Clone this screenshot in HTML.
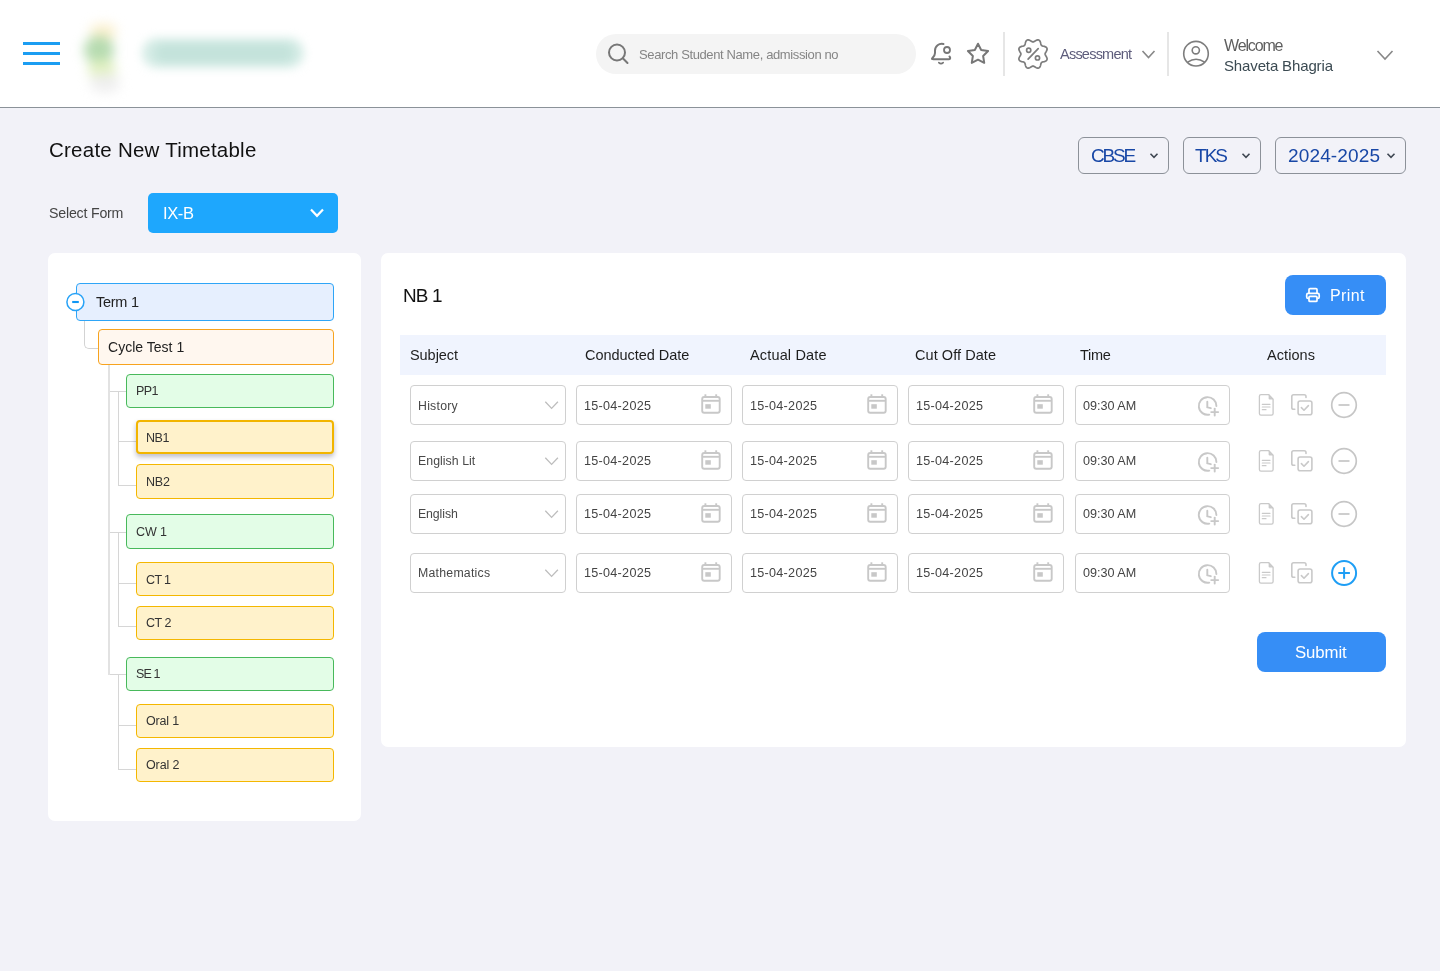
<!DOCTYPE html>
<html><head><meta charset="utf-8"><title>Create New Timetable</title>
<style>
html,body{margin:0;padding:0;}
body{width:1440px;height:971px;position:relative;overflow:hidden;background:#f2f2f8;font-family:"Liberation Sans",sans-serif;}
.a{position:absolute;}
.t{position:absolute;white-space:nowrap;line-height:1;will-change:transform;}
svg{overflow:visible;}
</style></head><body>
<div class="a" style="left:0px;top:0px;width:1440px;height:107px;background:#fff;"></div>
<div class="a" style="left:0px;top:107px;width:1440px;height:1px;background:#8b9299;"></div>
<div class="a" style="left:23px;top:42px;width:37px;height:3px;background:#1b9df2;"></div>
<div class="a" style="left:23px;top:52px;width:37px;height:3px;background:#1b9df2;"></div>
<div class="a" style="left:23px;top:62px;width:37px;height:3px;background:#1b9df2;"></div>
<div class="a" style="left:80px;top:20px;width:46px;height:76px;filter:blur(6px);"><div class="a" style="left:10px;top:4px;width:26px;height:16px;background:#fbf0cf;border-radius:8px;"></div><div class="a" style="left:4px;top:16px;width:30px;height:28px;background:#b6dbb0;border-radius:14px;"></div><div class="a" style="left:8px;top:40px;width:28px;height:18px;background:#e2f1c2;border-radius:9px;"></div><div class="a" style="left:10px;top:54px;width:30px;height:18px;background:#efefef;border-radius:9px;"></div></div>
<div class="a" style="left:134px;top:30px;width:178px;height:46px;filter:blur(5px);"><div class="a" style="left:8px;top:8px;width:162px;height:30px;background:#d5ece6;border-radius:15px;"></div><div class="a" style="left:20px;top:13px;width:140px;height:20px;background:#c4e3db;border-radius:10px;"></div></div>
<div class="a" style="left:596px;top:34px;width:320px;height:40px;background:#f4f4f4;border-radius:20px;"></div>
<svg class="a" style="left:600px;top:36px" width="36" height="36" viewBox="600 36 36 36"><circle cx="617" cy="52.5" r="8" fill="none" stroke="#777" stroke-width="2"/><line x1="622.8" y1="58.3" x2="627.5" y2="63" stroke="#777" stroke-width="2" stroke-linecap="round"/></svg>
<div class="t" style="left:638.50px;top:48.00px;font-size:13.00px;color:#858585;letter-spacing:-0.381px;">Search Student Name, admission no</div>
<svg class="a" style="left:924px;top:36px" width="72" height="36" viewBox="0 0 72 36" fill="none" stroke="#777" stroke-width="2" stroke-linecap="round" stroke-linejoin="round"><path d="M19.5 8 C15 7 11 10 11 14.5 L11 17 C11 19.5 10 20.5 8.5 22 C7.5 23 8 23.2 9.5 23.2 L25 23.2 C26.5 23.2 26.5 21.5 25.5 20.5"/><circle cx="23" cy="14" r="3" stroke-width="1.8"/><path d="M14.8 26.6 Q17 28.8 19.2 26.6" stroke-width="1.6"/><path d="M54.00 7.70 L57.17 13.93 L64.08 15.02 L59.14 19.97 L60.23 26.88 L54.00 23.70 L47.77 26.88 L48.86 19.97 L43.92 15.02 L50.83 13.93 Z"/></svg>
<div class="a" style="left:1003px;top:32px;width:2px;height:44px;background:#e6e6e6;"></div>
<svg class="a" style="left:1012px;top:34px" width="44" height="40" viewBox="0 0 44 40" fill="none" stroke="#7c7c7c" stroke-width="1.7" stroke-linecap="round"><path d="M33.10 20.00 L33.16 20.48 L33.35 20.97 L33.63 21.49 L33.97 22.05 L34.34 22.65 L34.67 23.28 L34.94 23.93 L35.09 24.58 L35.10 25.20 L34.95 25.78 L34.65 26.29 L34.20 26.73 L33.64 27.08 L32.99 27.35 L32.31 27.56 L31.63 27.72 L30.99 27.87 L30.42 28.04 L29.94 28.26 L29.56 28.56 L29.26 28.94 L29.04 29.42 L28.87 29.99 L28.72 30.63 L28.56 31.31 L28.35 31.99 L28.08 32.64 L27.73 33.20 L27.29 33.65 L26.78 33.95 L26.20 34.10 L25.58 34.09 L24.93 33.94 L24.28 33.67 L23.65 33.34 L23.05 32.97 L22.49 32.63 L21.97 32.35 L21.48 32.16 L21.00 32.10 L20.52 32.16 L20.03 32.35 L19.51 32.63 L18.95 32.97 L18.35 33.34 L17.72 33.67 L17.07 33.94 L16.42 34.09 L15.80 34.10 L15.22 33.95 L14.71 33.65 L14.27 33.20 L13.92 32.64 L13.65 31.99 L13.44 31.31 L13.28 30.63 L13.13 29.99 L12.96 29.42 L12.74 28.94 L12.44 28.56 L12.06 28.26 L11.58 28.04 L11.01 27.87 L10.37 27.72 L9.69 27.56 L9.01 27.35 L8.36 27.08 L7.80 26.73 L7.35 26.29 L7.05 25.78 L6.90 25.20 L6.91 24.58 L7.06 23.93 L7.33 23.28 L7.66 22.65 L8.03 22.05 L8.37 21.49 L8.65 20.97 L8.84 20.48 L8.90 20.00 L8.84 19.52 L8.65 19.03 L8.37 18.51 L8.03 17.95 L7.66 17.35 L7.33 16.72 L7.06 16.07 L6.91 15.42 L6.90 14.80 L7.05 14.22 L7.35 13.71 L7.80 13.27 L8.36 12.92 L9.01 12.65 L9.69 12.44 L10.37 12.28 L11.01 12.13 L11.58 11.96 L12.06 11.74 L12.44 11.44 L12.74 11.06 L12.96 10.58 L13.13 10.01 L13.28 9.37 L13.44 8.69 L13.65 8.01 L13.92 7.36 L14.27 6.80 L14.71 6.35 L15.22 6.05 L15.80 5.90 L16.42 5.91 L17.07 6.06 L17.72 6.33 L18.35 6.66 L18.95 7.03 L19.51 7.37 L20.03 7.65 L20.52 7.84 L21.00 7.90 L21.48 7.84 L21.97 7.65 L22.49 7.37 L23.05 7.03 L23.65 6.66 L24.28 6.33 L24.93 6.06 L25.58 5.91 L26.20 5.90 L26.78 6.05 L27.29 6.35 L27.73 6.80 L28.08 7.36 L28.35 8.01 L28.56 8.69 L28.72 9.37 L28.87 10.01 L29.04 10.58 L29.26 11.06 L29.56 11.44 L29.94 11.74 L30.42 11.96 L30.99 12.13 L31.63 12.28 L32.31 12.44 L32.99 12.65 L33.64 12.92 L34.20 13.27 L34.65 13.71 L34.95 14.22 L35.10 14.80 L35.09 15.42 L34.94 16.07 L34.67 16.72 L34.34 17.35 L33.97 17.95 L33.63 18.51 L33.35 19.03 L33.16 19.52 Z"/><circle cx="16.7" cy="16.3" r="2.1"/><circle cx="25.5" cy="23.9" r="2.1"/><line x1="16.1" y1="25.1" x2="26.2" y2="14.6"/></svg>
<div class="t" style="left:1060.00px;top:47.00px;font-size:14.50px;color:#5d5c7b;letter-spacing:-0.772px;">Assessment</div>
<svg class="a" style="left:1138px;top:44px" width="22" height="20" viewBox="1138 44 22 20" fill="none" stroke="#888" stroke-width="1.6"><path d="M1142.5 51 L1148.5 57.5 L1154.5 51"/></svg>
<div class="a" style="left:1167px;top:32px;width:2px;height:44px;background:#e6e6e6;"></div>
<svg class="a" style="left:1176px;top:34px" width="40" height="40" viewBox="0 0 40 40" fill="none" stroke="#7d7d7d" stroke-width="1.6"><circle cx="20" cy="19.7" r="12.3"/><circle cx="19.8" cy="16.3" r="3.6"/><path d="M11.7 28.2 Q20 22.2 28.6 28.2"/></svg>
<div class="t" style="left:1224.00px;top:38.00px;font-size:16.00px;color:#5e5e5e;letter-spacing:-1.150px;">Welcome</div>
<div class="t" style="left:1224.00px;top:58.00px;font-size:15.00px;color:#3b4a52;letter-spacing:-0.136px;">Shaveta Bhagria</div>
<svg class="a" style="left:1372px;top:44px" width="26" height="22" viewBox="1372 44 26 22" fill="none" stroke="#888" stroke-width="1.6"><path d="M1377.5 51 L1385 59 L1392.5 51"/></svg>
<div class="t" style="left:48.70px;top:140.00px;font-size:20.50px;color:#111;letter-spacing:0.237px;">Create New Timetable</div>
<div class="t" style="left:48.50px;top:206.00px;font-size:14.20px;color:#454545;letter-spacing:-0.205px;">Select Form</div>
<div class="a" style="left:148px;top:193px;width:190px;height:40px;background:#1ea7fd;border-radius:5px;"></div>
<div class="t" style="left:162.80px;top:205.00px;font-size:16.50px;color:#fff;letter-spacing:-0.367px;">IX-B</div>
<svg class="a" style="left:305px;top:204px" width="24" height="18" viewBox="305 204 24 18" fill="none" stroke="#fff" stroke-width="2.2"><path d="M311 209.5 L317 215.8 L323 209.5"/></svg>
<div class="a" style="left:1078px;top:137px;width:91px;height:37px;border:1px solid #8c9199;border-radius:6px;box-sizing:border-box;"></div>
<div class="t" style="left:1090.80px;top:146.00px;font-size:19.00px;color:#1847a6;letter-spacing:-2.183px;">CBSE</div>
<svg class="a" style="left:1148px;top:150px" width="12" height="12" viewBox="1148 150 12 12" fill="none" stroke="#3f4752" stroke-width="1.6"><path d="M1150.5 153.8 L1154 157.3 L1157.5 153.8"/></svg>
<div class="a" style="left:1183px;top:137px;width:78px;height:37px;border:1px solid #8c9199;border-radius:6px;box-sizing:border-box;"></div>
<div class="t" style="left:1195.00px;top:146.00px;font-size:19.00px;color:#1847a6;letter-spacing:-1.975px;">TKS</div>
<svg class="a" style="left:1240px;top:150px" width="12" height="12" viewBox="1240 150 12 12" fill="none" stroke="#3f4752" stroke-width="1.6"><path d="M1242.5 153.8 L1246 157.3 L1249.5 153.8"/></svg>
<div class="a" style="left:1275px;top:137px;width:131px;height:37px;border:1px solid #8c9199;border-radius:6px;box-sizing:border-box;"></div>
<div class="t" style="left:1288.00px;top:146.00px;font-size:19.00px;color:#1847a6;letter-spacing:0.144px;">2024-2025</div>
<svg class="a" style="left:1385px;top:150px" width="12" height="12" viewBox="1385 150 12 12" fill="none" stroke="#3f4752" stroke-width="1.6"><path d="M1387.5 153.8 L1391 157.3 L1394.5 153.8"/></svg>
<div class="a" style="left:48px;top:253px;width:313px;height:568px;background:#fff;border-radius:7px;"></div>
<div class="a" style="left:84px;top:320px;width:14px;height:29px;border-left:1.5px solid #d3d3d3;border-bottom:1.5px solid #d3d3d3;border-bottom-left-radius:5px;box-sizing:border-box;"></div>
<div class="a" style="left:108px;top:365px;width:2px;height:310px;background:#e2e2e2;"></div>
<div class="a" style="left:110px;top:391px;width:16px;height:1px;background:#d6d6d6;"></div>
<div class="a" style="left:110px;top:532px;width:16px;height:1px;background:#d6d6d6;"></div>
<div class="a" style="left:110px;top:674px;width:16px;height:1px;background:#d6d6d6;"></div>
<div class="a" style="left:118px;top:391px;width:1px;height:95px;background:#d6d6d6;"></div>
<div class="a" style="left:119px;top:441px;width:17px;height:1px;background:#d6d6d6;"></div>
<div class="a" style="left:119px;top:485px;width:17px;height:1px;background:#d6d6d6;"></div>
<div class="a" style="left:118px;top:532px;width:1px;height:95px;background:#d6d6d6;"></div>
<div class="a" style="left:119px;top:583px;width:17px;height:1px;background:#d6d6d6;"></div>
<div class="a" style="left:119px;top:626px;width:17px;height:1px;background:#d6d6d6;"></div>
<div class="a" style="left:118px;top:674px;width:1px;height:96px;background:#d6d6d6;"></div>
<div class="a" style="left:119px;top:725px;width:17px;height:1px;background:#d6d6d6;"></div>
<div class="a" style="left:119px;top:769px;width:17px;height:1px;background:#d6d6d6;"></div>
<div class="a" style="left:75.5px;top:283px;width:258.0px;height:37.5px;background:#e6effe;border:1.5px solid #2ea5f7;border-radius:4px;box-sizing:border-box;"></div>
<div class="t" style="left:96.00px;top:295.00px;font-size:14.50px;color:#222;letter-spacing:-0.260px;">Term 1</div>
<div class="a" style="left:97.5px;top:328.5px;width:236.0px;height:36.5px;background:#fff7ef;border:1.5px solid #f7a31e;border-radius:4px;box-sizing:border-box;"></div>
<div class="t" style="left:108.00px;top:340.00px;font-size:14.00px;color:#222;letter-spacing:0.018px;">Cycle Test 1</div>
<div class="a" style="left:125.5px;top:373.5px;width:208.0px;height:34.0px;background:#e3fde7;border:1.5px solid #48b95b;border-radius:4px;box-sizing:border-box;"></div>
<div class="t" style="left:136.00px;top:385.00px;font-size:12.50px;color:#333;letter-spacing:-0.575px;">PP1</div>
<div class="a" style="left:135.5px;top:420px;width:198.0px;height:34px;background:#fff2cb;border:2.2px solid #f2b500;border-radius:4px;box-sizing:border-box;box-shadow:0 3px 5px rgba(20,20,60,0.28);"></div>
<div class="t" style="left:146.00px;top:432.00px;font-size:12.50px;color:#333;letter-spacing:-0.450px;">NB1</div>
<div class="a" style="left:135.5px;top:464px;width:198.0px;height:34.5px;background:#fff2cb;border:1.5px solid #f4b700;border-radius:4px;box-sizing:border-box;"></div>
<div class="t" style="left:146.00px;top:476.00px;font-size:12.50px;color:#333;letter-spacing:-0.200px;">NB2</div>
<div class="a" style="left:125.5px;top:514px;width:208.0px;height:34.5px;background:#e3fde7;border:1.5px solid #48b95b;border-radius:4px;box-sizing:border-box;"></div>
<div class="t" style="left:136.00px;top:526.00px;font-size:12.50px;color:#333;letter-spacing:-0.083px;">CW 1</div>
<div class="a" style="left:135.5px;top:561.5px;width:198.0px;height:34.0px;background:#fff2cb;border:1.5px solid #f4b700;border-radius:4px;box-sizing:border-box;"></div>
<div class="t" style="left:146.00px;top:574.00px;font-size:12.50px;color:#333;letter-spacing:-0.650px;">CT 1</div>
<div class="a" style="left:135.5px;top:605.5px;width:198.0px;height:34.0px;background:#fff2cb;border:1.5px solid #f4b700;border-radius:4px;box-sizing:border-box;"></div>
<div class="t" style="left:146.00px;top:617.00px;font-size:12.50px;color:#333;letter-spacing:-0.483px;">CT 2</div>
<div class="a" style="left:125.5px;top:656.5px;width:208.0px;height:34.0px;background:#e3fde7;border:1.5px solid #48b95b;border-radius:4px;box-sizing:border-box;"></div>
<div class="t" style="left:136.00px;top:668.00px;font-size:12.50px;color:#333;letter-spacing:-0.867px;">SE 1</div>
<div class="a" style="left:135.5px;top:703.5px;width:198.0px;height:34.0px;background:#fff2cb;border:1.5px solid #f4b700;border-radius:4px;box-sizing:border-box;"></div>
<div class="t" style="left:146.00px;top:715.00px;font-size:12.50px;color:#333;letter-spacing:-0.170px;">Oral 1</div>
<div class="a" style="left:135.5px;top:747.5px;width:198.0px;height:34.0px;background:#fff2cb;border:1.5px solid #f4b700;border-radius:4px;box-sizing:border-box;"></div>
<div class="t" style="left:146.00px;top:759.00px;font-size:12.50px;color:#333;letter-spacing:-0.130px;">Oral 2</div>
<svg class="a" style="left:64px;top:291px" width="22" height="22" viewBox="64 291 22 22"><circle cx="75.4" cy="302" r="8.5" fill="#fff" stroke="#27a2f7" stroke-width="1.5"/><line x1="72.2" y1="302" x2="78.8" y2="302" stroke="#0f97f5" stroke-width="2.1"/></svg>
<div class="a" style="left:381px;top:253px;width:1025px;height:493.5px;background:#fff;border-radius:7px;"></div>
<div class="t" style="left:402.50px;top:287.00px;font-size:18.90px;color:#111;letter-spacing:-0.833px;">NB 1</div>
<div class="a" style="left:1284.5px;top:275px;width:101.0px;height:40px;background:#368ef6;border-radius:8px;"></div>
<svg class="a" style="left:1300px;top:283px" width="26" height="24" viewBox="0 0 26 24" fill="none" stroke="#fff" stroke-width="1.7" stroke-linejoin="round"><path d="M9 9.9 L9 6.6 Q9 5.6 10 5.6 L16 5.6 Q17 5.6 17 6.6 L17 9.9"/><path d="M8.8 15.4 L8.2 15.4 Q6.7 15.4 6.7 13.9 L6.7 11.9 Q6.7 10.4 8.2 10.4 L17.7 10.4 Q19.2 10.4 19.2 11.9 L19.2 13.9 Q19.2 15.4 17.7 15.4 L17.2 15.4"/><path d="M10 13.4 L16 13.4 Q17 13.4 17 14.4 L17 17.4 Q17 18.4 16 18.4 L10 18.4 Q9 18.4 9 17.4 L9 14.4 Q9 13.4 10 13.4 Z"/></svg>
<div class="t" style="left:1330.00px;top:288.00px;font-size:16.00px;color:#fff;letter-spacing:0.400px;">Print</div>
<div class="a" style="left:399.5px;top:335px;width:986.0px;height:40px;background:#f0f4fe;"></div>
<div class="t" style="left:410.00px;top:348.00px;font-size:14.50px;color:#1e1e1e;letter-spacing:-0.058px;">Subject</div>
<div class="t" style="left:585.00px;top:348.00px;font-size:14.50px;color:#1e1e1e;letter-spacing:-0.042px;">Conducted Date</div>
<div class="t" style="left:750.25px;top:348.00px;font-size:14.50px;color:#1e1e1e;letter-spacing:0.155px;">Actual Date</div>
<div class="t" style="left:915.00px;top:348.00px;font-size:14.50px;color:#1e1e1e;letter-spacing:0.059px;">Cut Off Date</div>
<div class="t" style="left:1080.25px;top:348.00px;font-size:14.50px;color:#1e1e1e;letter-spacing:-0.317px;">Time</div>
<div class="t" style="left:1267.00px;top:348.00px;font-size:14.50px;color:#1e1e1e;letter-spacing:0.075px;">Actions</div>
<div class="a" style="left:409.5px;top:385px;width:156.0px;height:40px;border:1px solid #d0d0d0;border-radius:4px;box-sizing:border-box;background:#fff;"></div>
<div class="t" style="left:417.75px;top:400.00px;font-size:12.30px;color:#484848;letter-spacing:0.250px;">History</div>
<svg class="a" style="left:540px;top:395px" width="24" height="20" viewBox="540 395 24 20" fill="none" stroke="#bdbdbd" stroke-width="1.3"><path d="M545.3 401.7 L551.6 408.4 L557.9 401.7"/></svg>
<div class="a" style="left:576.3px;top:385px;width:155.29999999999995px;height:40px;border:1px solid #d0d0d0;border-radius:4px;box-sizing:border-box;background:#fff;"></div>
<div class="t" style="left:584.30px;top:400.00px;font-size:12.60px;color:#444;letter-spacing:0.283px;">15-04-2025</div>
<svg class="a" style="left:696.00px;top:390px" width="30" height="30" viewBox="0 0 30 30" fill="none" stroke="#c8c8c8" stroke-width="1.9"><path d="M8.2 7 L21.7 7 Q23.7 7 23.7 9 L23.7 20.8 Q23.7 22.8 21.7 22.8 L8.2 22.8 Q6.2 22.8 6.2 20.8 L6.2 9 Q6.2 7 8.2 7 Z"/><line x1="6.2" y1="10.8" x2="23.7" y2="10.8"/><line x1="9.4" y1="4.3" x2="9.4" y2="7"/><line x1="20.2" y1="4.3" x2="20.2" y2="7"/><rect x="9.3" y="14.2" width="5.5" height="4.5" fill="#c8c8c8" stroke="none"/></svg>
<div class="a" style="left:742.3px;top:385px;width:155.29999999999995px;height:40px;border:1px solid #d0d0d0;border-radius:4px;box-sizing:border-box;background:#fff;"></div>
<div class="t" style="left:750.30px;top:400.00px;font-size:12.60px;color:#444;letter-spacing:0.283px;">15-04-2025</div>
<svg class="a" style="left:862.00px;top:390px" width="30" height="30" viewBox="0 0 30 30" fill="none" stroke="#c8c8c8" stroke-width="1.9"><path d="M8.2 7 L21.7 7 Q23.7 7 23.7 9 L23.7 20.8 Q23.7 22.8 21.7 22.8 L8.2 22.8 Q6.2 22.8 6.2 20.8 L6.2 9 Q6.2 7 8.2 7 Z"/><line x1="6.2" y1="10.8" x2="23.7" y2="10.8"/><line x1="9.4" y1="4.3" x2="9.4" y2="7"/><line x1="20.2" y1="4.3" x2="20.2" y2="7"/><rect x="9.3" y="14.2" width="5.5" height="4.5" fill="#c8c8c8" stroke="none"/></svg>
<div class="a" style="left:908.3px;top:385px;width:155.29999999999995px;height:40px;border:1px solid #d0d0d0;border-radius:4px;box-sizing:border-box;background:#fff;"></div>
<div class="t" style="left:916.30px;top:400.00px;font-size:12.60px;color:#444;letter-spacing:0.283px;">15-04-2025</div>
<svg class="a" style="left:1028.00px;top:390px" width="30" height="30" viewBox="0 0 30 30" fill="none" stroke="#c8c8c8" stroke-width="1.9"><path d="M8.2 7 L21.7 7 Q23.7 7 23.7 9 L23.7 20.8 Q23.7 22.8 21.7 22.8 L8.2 22.8 Q6.2 22.8 6.2 20.8 L6.2 9 Q6.2 7 8.2 7 Z"/><line x1="6.2" y1="10.8" x2="23.7" y2="10.8"/><line x1="9.4" y1="4.3" x2="9.4" y2="7"/><line x1="20.2" y1="4.3" x2="20.2" y2="7"/><rect x="9.3" y="14.2" width="5.5" height="4.5" fill="#c8c8c8" stroke="none"/></svg>
<div class="a" style="left:1074.5px;top:385px;width:155.5px;height:40px;border:1px solid #d0d0d0;border-radius:4px;box-sizing:border-box;background:#fff;"></div>
<div class="t" style="left:1082.50px;top:400.00px;font-size:12.60px;color:#444;">09:30 AM</div>
<svg class="a" style="left:1192px;top:390px" width="30" height="30" viewBox="0 0 30 30" fill="none" stroke="#c8c8c8" stroke-width="1.9" stroke-linecap="round"><path d="M24.4 16 A8.8 8.8 0 1 0 17.3 24.6"/><path d="M15.3 11.8 L15.3 17.3 L18.8 18.2"/><line x1="22.7" y1="18.6" x2="22.7" y2="25.6"/><line x1="19.2" y1="22.1" x2="26.2" y2="22.1"/></svg>
<svg class="a" style="left:1254px;top:390px" width="64" height="30" viewBox="0 0 64 30" fill="none" stroke="#c9c9c9" stroke-width="1.6" stroke-linecap="round" stroke-linejoin="round"><path d="M7 4.7 L14.9 4.7 L19.1 9.3 L19.1 23.6 Q19.1 25.2 17.5 25.2 L7 25.2 Q5.4 25.2 5.4 23.6 L5.4 6.3 Q5.4 4.7 7 4.7 Z" stroke-width="1.3"/><path d="M14.6 4.8 L19.1 9.6 L15.6 9.6 Q14.6 9.6 14.6 8.6 Z" fill="#c9c9c9" stroke="none"/><line x1="8.3" y1="14.3" x2="16" y2="14.3" stroke-width="1.2"/><line x1="8.3" y1="17" x2="16" y2="17" stroke-width="1.2"/><line x1="8.3" y1="19.7" x2="12" y2="19.7" stroke-width="1.2"/><path d="M52 7.4 L52 6.6 Q52 4.8 50.2 4.8 L39.6 4.8 Q37.8 4.8 37.8 6.6 L37.8 17.4 Q37.8 19.2 39.6 19.2 L40.8 19.2"/><path d="M46.1 11 L55.9 11 Q57.9 11 57.9 13 L57.9 22.8 Q57.9 24.8 55.9 24.8 L46.1 24.8 Q44.1 24.8 44.1 22.8 L44.1 13 Q44.1 11 46.1 11 Z"/><path d="M47.4 17.6 L50 20.2 L54.4 15.6"/></svg>
<svg class="a" style="left:1328px;top:389px" width="32" height="32" viewBox="1328 389 32 32" fill="none" stroke="#c6c6c6" stroke-width="1.7"><circle cx="1344" cy="405" r="12.3"/><line x1="1338.5" y1="405" x2="1349.5" y2="405"/></svg>
<div class="a" style="left:409.5px;top:440.5px;width:156.0px;height:40.0px;border:1px solid #d0d0d0;border-radius:4px;box-sizing:border-box;background:#fff;"></div>
<div class="t" style="left:417.75px;top:455.00px;font-size:12.30px;color:#484848;letter-spacing:0.055px;">English Lit</div>
<svg class="a" style="left:540px;top:450.5px" width="24" height="20" viewBox="540 450.5 24 20" fill="none" stroke="#bdbdbd" stroke-width="1.3"><path d="M545.3 457.2 L551.6 463.9 L557.9 457.2"/></svg>
<div class="a" style="left:576.3px;top:440.5px;width:155.29999999999995px;height:40.0px;border:1px solid #d0d0d0;border-radius:4px;box-sizing:border-box;background:#fff;"></div>
<div class="t" style="left:584.30px;top:455.00px;font-size:12.60px;color:#444;letter-spacing:0.283px;">15-04-2025</div>
<svg class="a" style="left:696.00px;top:445.5px" width="30" height="30" viewBox="0 0 30 30" fill="none" stroke="#c8c8c8" stroke-width="1.9"><path d="M8.2 7 L21.7 7 Q23.7 7 23.7 9 L23.7 20.8 Q23.7 22.8 21.7 22.8 L8.2 22.8 Q6.2 22.8 6.2 20.8 L6.2 9 Q6.2 7 8.2 7 Z"/><line x1="6.2" y1="10.8" x2="23.7" y2="10.8"/><line x1="9.4" y1="4.3" x2="9.4" y2="7"/><line x1="20.2" y1="4.3" x2="20.2" y2="7"/><rect x="9.3" y="14.2" width="5.5" height="4.5" fill="#c8c8c8" stroke="none"/></svg>
<div class="a" style="left:742.3px;top:440.5px;width:155.29999999999995px;height:40.0px;border:1px solid #d0d0d0;border-radius:4px;box-sizing:border-box;background:#fff;"></div>
<div class="t" style="left:750.30px;top:455.00px;font-size:12.60px;color:#444;letter-spacing:0.283px;">15-04-2025</div>
<svg class="a" style="left:862.00px;top:445.5px" width="30" height="30" viewBox="0 0 30 30" fill="none" stroke="#c8c8c8" stroke-width="1.9"><path d="M8.2 7 L21.7 7 Q23.7 7 23.7 9 L23.7 20.8 Q23.7 22.8 21.7 22.8 L8.2 22.8 Q6.2 22.8 6.2 20.8 L6.2 9 Q6.2 7 8.2 7 Z"/><line x1="6.2" y1="10.8" x2="23.7" y2="10.8"/><line x1="9.4" y1="4.3" x2="9.4" y2="7"/><line x1="20.2" y1="4.3" x2="20.2" y2="7"/><rect x="9.3" y="14.2" width="5.5" height="4.5" fill="#c8c8c8" stroke="none"/></svg>
<div class="a" style="left:908.3px;top:440.5px;width:155.29999999999995px;height:40.0px;border:1px solid #d0d0d0;border-radius:4px;box-sizing:border-box;background:#fff;"></div>
<div class="t" style="left:916.30px;top:455.00px;font-size:12.60px;color:#444;letter-spacing:0.283px;">15-04-2025</div>
<svg class="a" style="left:1028.00px;top:445.5px" width="30" height="30" viewBox="0 0 30 30" fill="none" stroke="#c8c8c8" stroke-width="1.9"><path d="M8.2 7 L21.7 7 Q23.7 7 23.7 9 L23.7 20.8 Q23.7 22.8 21.7 22.8 L8.2 22.8 Q6.2 22.8 6.2 20.8 L6.2 9 Q6.2 7 8.2 7 Z"/><line x1="6.2" y1="10.8" x2="23.7" y2="10.8"/><line x1="9.4" y1="4.3" x2="9.4" y2="7"/><line x1="20.2" y1="4.3" x2="20.2" y2="7"/><rect x="9.3" y="14.2" width="5.5" height="4.5" fill="#c8c8c8" stroke="none"/></svg>
<div class="a" style="left:1074.5px;top:440.5px;width:155.5px;height:40.0px;border:1px solid #d0d0d0;border-radius:4px;box-sizing:border-box;background:#fff;"></div>
<div class="t" style="left:1082.50px;top:455.00px;font-size:12.60px;color:#444;">09:30 AM</div>
<svg class="a" style="left:1192px;top:445.5px" width="30" height="30" viewBox="0 0 30 30" fill="none" stroke="#c8c8c8" stroke-width="1.9" stroke-linecap="round"><path d="M24.4 16 A8.8 8.8 0 1 0 17.3 24.6"/><path d="M15.3 11.8 L15.3 17.3 L18.8 18.2"/><line x1="22.7" y1="18.6" x2="22.7" y2="25.6"/><line x1="19.2" y1="22.1" x2="26.2" y2="22.1"/></svg>
<svg class="a" style="left:1254px;top:445.5px" width="64" height="30" viewBox="0 0 64 30" fill="none" stroke="#c9c9c9" stroke-width="1.6" stroke-linecap="round" stroke-linejoin="round"><path d="M7 4.7 L14.9 4.7 L19.1 9.3 L19.1 23.6 Q19.1 25.2 17.5 25.2 L7 25.2 Q5.4 25.2 5.4 23.6 L5.4 6.3 Q5.4 4.7 7 4.7 Z" stroke-width="1.3"/><path d="M14.6 4.8 L19.1 9.6 L15.6 9.6 Q14.6 9.6 14.6 8.6 Z" fill="#c9c9c9" stroke="none"/><line x1="8.3" y1="14.3" x2="16" y2="14.3" stroke-width="1.2"/><line x1="8.3" y1="17" x2="16" y2="17" stroke-width="1.2"/><line x1="8.3" y1="19.7" x2="12" y2="19.7" stroke-width="1.2"/><path d="M52 7.4 L52 6.6 Q52 4.8 50.2 4.8 L39.6 4.8 Q37.8 4.8 37.8 6.6 L37.8 17.4 Q37.8 19.2 39.6 19.2 L40.8 19.2"/><path d="M46.1 11 L55.9 11 Q57.9 11 57.9 13 L57.9 22.8 Q57.9 24.8 55.9 24.8 L46.1 24.8 Q44.1 24.8 44.1 22.8 L44.1 13 Q44.1 11 46.1 11 Z"/><path d="M47.4 17.6 L50 20.2 L54.4 15.6"/></svg>
<svg class="a" style="left:1328px;top:444.5px" width="32" height="32" viewBox="1328 444.5 32 32" fill="none" stroke="#c6c6c6" stroke-width="1.7"><circle cx="1344" cy="460.5" r="12.3"/><line x1="1338.5" y1="460.5" x2="1349.5" y2="460.5"/></svg>
<div class="a" style="left:409.5px;top:493.5px;width:156.0px;height:40.0px;border:1px solid #d0d0d0;border-radius:4px;box-sizing:border-box;background:#fff;"></div>
<div class="t" style="left:417.75px;top:508.00px;font-size:12.30px;color:#484848;letter-spacing:-0.092px;">English</div>
<svg class="a" style="left:540px;top:503.5px" width="24" height="20" viewBox="540 503.5 24 20" fill="none" stroke="#bdbdbd" stroke-width="1.3"><path d="M545.3 510.2 L551.6 516.9 L557.9 510.2"/></svg>
<div class="a" style="left:576.3px;top:493.5px;width:155.29999999999995px;height:40.0px;border:1px solid #d0d0d0;border-radius:4px;box-sizing:border-box;background:#fff;"></div>
<div class="t" style="left:584.30px;top:508.00px;font-size:12.60px;color:#444;letter-spacing:0.283px;">15-04-2025</div>
<svg class="a" style="left:696.00px;top:498.5px" width="30" height="30" viewBox="0 0 30 30" fill="none" stroke="#c8c8c8" stroke-width="1.9"><path d="M8.2 7 L21.7 7 Q23.7 7 23.7 9 L23.7 20.8 Q23.7 22.8 21.7 22.8 L8.2 22.8 Q6.2 22.8 6.2 20.8 L6.2 9 Q6.2 7 8.2 7 Z"/><line x1="6.2" y1="10.8" x2="23.7" y2="10.8"/><line x1="9.4" y1="4.3" x2="9.4" y2="7"/><line x1="20.2" y1="4.3" x2="20.2" y2="7"/><rect x="9.3" y="14.2" width="5.5" height="4.5" fill="#c8c8c8" stroke="none"/></svg>
<div class="a" style="left:742.3px;top:493.5px;width:155.29999999999995px;height:40.0px;border:1px solid #d0d0d0;border-radius:4px;box-sizing:border-box;background:#fff;"></div>
<div class="t" style="left:750.30px;top:508.00px;font-size:12.60px;color:#444;letter-spacing:0.283px;">15-04-2025</div>
<svg class="a" style="left:862.00px;top:498.5px" width="30" height="30" viewBox="0 0 30 30" fill="none" stroke="#c8c8c8" stroke-width="1.9"><path d="M8.2 7 L21.7 7 Q23.7 7 23.7 9 L23.7 20.8 Q23.7 22.8 21.7 22.8 L8.2 22.8 Q6.2 22.8 6.2 20.8 L6.2 9 Q6.2 7 8.2 7 Z"/><line x1="6.2" y1="10.8" x2="23.7" y2="10.8"/><line x1="9.4" y1="4.3" x2="9.4" y2="7"/><line x1="20.2" y1="4.3" x2="20.2" y2="7"/><rect x="9.3" y="14.2" width="5.5" height="4.5" fill="#c8c8c8" stroke="none"/></svg>
<div class="a" style="left:908.3px;top:493.5px;width:155.29999999999995px;height:40.0px;border:1px solid #d0d0d0;border-radius:4px;box-sizing:border-box;background:#fff;"></div>
<div class="t" style="left:916.30px;top:508.00px;font-size:12.60px;color:#444;letter-spacing:0.283px;">15-04-2025</div>
<svg class="a" style="left:1028.00px;top:498.5px" width="30" height="30" viewBox="0 0 30 30" fill="none" stroke="#c8c8c8" stroke-width="1.9"><path d="M8.2 7 L21.7 7 Q23.7 7 23.7 9 L23.7 20.8 Q23.7 22.8 21.7 22.8 L8.2 22.8 Q6.2 22.8 6.2 20.8 L6.2 9 Q6.2 7 8.2 7 Z"/><line x1="6.2" y1="10.8" x2="23.7" y2="10.8"/><line x1="9.4" y1="4.3" x2="9.4" y2="7"/><line x1="20.2" y1="4.3" x2="20.2" y2="7"/><rect x="9.3" y="14.2" width="5.5" height="4.5" fill="#c8c8c8" stroke="none"/></svg>
<div class="a" style="left:1074.5px;top:493.5px;width:155.5px;height:40.0px;border:1px solid #d0d0d0;border-radius:4px;box-sizing:border-box;background:#fff;"></div>
<div class="t" style="left:1082.50px;top:508.00px;font-size:12.60px;color:#444;">09:30 AM</div>
<svg class="a" style="left:1192px;top:498.5px" width="30" height="30" viewBox="0 0 30 30" fill="none" stroke="#c8c8c8" stroke-width="1.9" stroke-linecap="round"><path d="M24.4 16 A8.8 8.8 0 1 0 17.3 24.6"/><path d="M15.3 11.8 L15.3 17.3 L18.8 18.2"/><line x1="22.7" y1="18.6" x2="22.7" y2="25.6"/><line x1="19.2" y1="22.1" x2="26.2" y2="22.1"/></svg>
<svg class="a" style="left:1254px;top:498.5px" width="64" height="30" viewBox="0 0 64 30" fill="none" stroke="#c9c9c9" stroke-width="1.6" stroke-linecap="round" stroke-linejoin="round"><path d="M7 4.7 L14.9 4.7 L19.1 9.3 L19.1 23.6 Q19.1 25.2 17.5 25.2 L7 25.2 Q5.4 25.2 5.4 23.6 L5.4 6.3 Q5.4 4.7 7 4.7 Z" stroke-width="1.3"/><path d="M14.6 4.8 L19.1 9.6 L15.6 9.6 Q14.6 9.6 14.6 8.6 Z" fill="#c9c9c9" stroke="none"/><line x1="8.3" y1="14.3" x2="16" y2="14.3" stroke-width="1.2"/><line x1="8.3" y1="17" x2="16" y2="17" stroke-width="1.2"/><line x1="8.3" y1="19.7" x2="12" y2="19.7" stroke-width="1.2"/><path d="M52 7.4 L52 6.6 Q52 4.8 50.2 4.8 L39.6 4.8 Q37.8 4.8 37.8 6.6 L37.8 17.4 Q37.8 19.2 39.6 19.2 L40.8 19.2"/><path d="M46.1 11 L55.9 11 Q57.9 11 57.9 13 L57.9 22.8 Q57.9 24.8 55.9 24.8 L46.1 24.8 Q44.1 24.8 44.1 22.8 L44.1 13 Q44.1 11 46.1 11 Z"/><path d="M47.4 17.6 L50 20.2 L54.4 15.6"/></svg>
<svg class="a" style="left:1328px;top:497.5px" width="32" height="32" viewBox="1328 497.5 32 32" fill="none" stroke="#c6c6c6" stroke-width="1.7"><circle cx="1344" cy="513.5" r="12.3"/><line x1="1338.5" y1="513.5" x2="1349.5" y2="513.5"/></svg>
<div class="a" style="left:409.5px;top:552.5px;width:156.0px;height:40.0px;border:1px solid #d0d0d0;border-radius:4px;box-sizing:border-box;background:#fff;"></div>
<div class="t" style="left:417.75px;top:567.00px;font-size:12.30px;color:#484848;letter-spacing:0.240px;">Mathematics</div>
<svg class="a" style="left:540px;top:562.5px" width="24" height="20" viewBox="540 562.5 24 20" fill="none" stroke="#bdbdbd" stroke-width="1.3"><path d="M545.3 569.2 L551.6 575.9 L557.9 569.2"/></svg>
<div class="a" style="left:576.3px;top:552.5px;width:155.29999999999995px;height:40.0px;border:1px solid #d0d0d0;border-radius:4px;box-sizing:border-box;background:#fff;"></div>
<div class="t" style="left:584.30px;top:567.00px;font-size:12.60px;color:#444;letter-spacing:0.283px;">15-04-2025</div>
<svg class="a" style="left:696.00px;top:557.5px" width="30" height="30" viewBox="0 0 30 30" fill="none" stroke="#c8c8c8" stroke-width="1.9"><path d="M8.2 7 L21.7 7 Q23.7 7 23.7 9 L23.7 20.8 Q23.7 22.8 21.7 22.8 L8.2 22.8 Q6.2 22.8 6.2 20.8 L6.2 9 Q6.2 7 8.2 7 Z"/><line x1="6.2" y1="10.8" x2="23.7" y2="10.8"/><line x1="9.4" y1="4.3" x2="9.4" y2="7"/><line x1="20.2" y1="4.3" x2="20.2" y2="7"/><rect x="9.3" y="14.2" width="5.5" height="4.5" fill="#c8c8c8" stroke="none"/></svg>
<div class="a" style="left:742.3px;top:552.5px;width:155.29999999999995px;height:40.0px;border:1px solid #d0d0d0;border-radius:4px;box-sizing:border-box;background:#fff;"></div>
<div class="t" style="left:750.30px;top:567.00px;font-size:12.60px;color:#444;letter-spacing:0.283px;">15-04-2025</div>
<svg class="a" style="left:862.00px;top:557.5px" width="30" height="30" viewBox="0 0 30 30" fill="none" stroke="#c8c8c8" stroke-width="1.9"><path d="M8.2 7 L21.7 7 Q23.7 7 23.7 9 L23.7 20.8 Q23.7 22.8 21.7 22.8 L8.2 22.8 Q6.2 22.8 6.2 20.8 L6.2 9 Q6.2 7 8.2 7 Z"/><line x1="6.2" y1="10.8" x2="23.7" y2="10.8"/><line x1="9.4" y1="4.3" x2="9.4" y2="7"/><line x1="20.2" y1="4.3" x2="20.2" y2="7"/><rect x="9.3" y="14.2" width="5.5" height="4.5" fill="#c8c8c8" stroke="none"/></svg>
<div class="a" style="left:908.3px;top:552.5px;width:155.29999999999995px;height:40.0px;border:1px solid #d0d0d0;border-radius:4px;box-sizing:border-box;background:#fff;"></div>
<div class="t" style="left:916.30px;top:567.00px;font-size:12.60px;color:#444;letter-spacing:0.283px;">15-04-2025</div>
<svg class="a" style="left:1028.00px;top:557.5px" width="30" height="30" viewBox="0 0 30 30" fill="none" stroke="#c8c8c8" stroke-width="1.9"><path d="M8.2 7 L21.7 7 Q23.7 7 23.7 9 L23.7 20.8 Q23.7 22.8 21.7 22.8 L8.2 22.8 Q6.2 22.8 6.2 20.8 L6.2 9 Q6.2 7 8.2 7 Z"/><line x1="6.2" y1="10.8" x2="23.7" y2="10.8"/><line x1="9.4" y1="4.3" x2="9.4" y2="7"/><line x1="20.2" y1="4.3" x2="20.2" y2="7"/><rect x="9.3" y="14.2" width="5.5" height="4.5" fill="#c8c8c8" stroke="none"/></svg>
<div class="a" style="left:1074.5px;top:552.5px;width:155.5px;height:40.0px;border:1px solid #d0d0d0;border-radius:4px;box-sizing:border-box;background:#fff;"></div>
<div class="t" style="left:1082.50px;top:567.00px;font-size:12.60px;color:#444;">09:30 AM</div>
<svg class="a" style="left:1192px;top:557.5px" width="30" height="30" viewBox="0 0 30 30" fill="none" stroke="#c8c8c8" stroke-width="1.9" stroke-linecap="round"><path d="M24.4 16 A8.8 8.8 0 1 0 17.3 24.6"/><path d="M15.3 11.8 L15.3 17.3 L18.8 18.2"/><line x1="22.7" y1="18.6" x2="22.7" y2="25.6"/><line x1="19.2" y1="22.1" x2="26.2" y2="22.1"/></svg>
<svg class="a" style="left:1254px;top:557.5px" width="64" height="30" viewBox="0 0 64 30" fill="none" stroke="#c9c9c9" stroke-width="1.6" stroke-linecap="round" stroke-linejoin="round"><path d="M7 4.7 L14.9 4.7 L19.1 9.3 L19.1 23.6 Q19.1 25.2 17.5 25.2 L7 25.2 Q5.4 25.2 5.4 23.6 L5.4 6.3 Q5.4 4.7 7 4.7 Z" stroke-width="1.3"/><path d="M14.6 4.8 L19.1 9.6 L15.6 9.6 Q14.6 9.6 14.6 8.6 Z" fill="#c9c9c9" stroke="none"/><line x1="8.3" y1="14.3" x2="16" y2="14.3" stroke-width="1.2"/><line x1="8.3" y1="17" x2="16" y2="17" stroke-width="1.2"/><line x1="8.3" y1="19.7" x2="12" y2="19.7" stroke-width="1.2"/><path d="M52 7.4 L52 6.6 Q52 4.8 50.2 4.8 L39.6 4.8 Q37.8 4.8 37.8 6.6 L37.8 17.4 Q37.8 19.2 39.6 19.2 L40.8 19.2"/><path d="M46.1 11 L55.9 11 Q57.9 11 57.9 13 L57.9 22.8 Q57.9 24.8 55.9 24.8 L46.1 24.8 Q44.1 24.8 44.1 22.8 L44.1 13 Q44.1 11 46.1 11 Z"/><path d="M47.4 17.6 L50 20.2 L54.4 15.6"/></svg>
<svg class="a" style="left:1328px;top:556.5px" width="32" height="32" viewBox="1328 556.5 32 32" fill="none" stroke="#1e9ef5" stroke-width="2"><circle cx="1344.1" cy="572.5" r="12"/><line x1="1338.3" y1="572.5" x2="1349.9" y2="572.5"/><line x1="1344.1" y1="566.7" x2="1344.1" y2="578.3"/></svg>
<div class="a" style="left:1257px;top:632px;width:128.5px;height:40px;background:#368ef6;border-radius:8px;"></div>
<div class="t" style="left:1295.20px;top:645.00px;font-size:16.80px;color:#fff;letter-spacing:-0.100px;">Submit</div>

</body></html>
